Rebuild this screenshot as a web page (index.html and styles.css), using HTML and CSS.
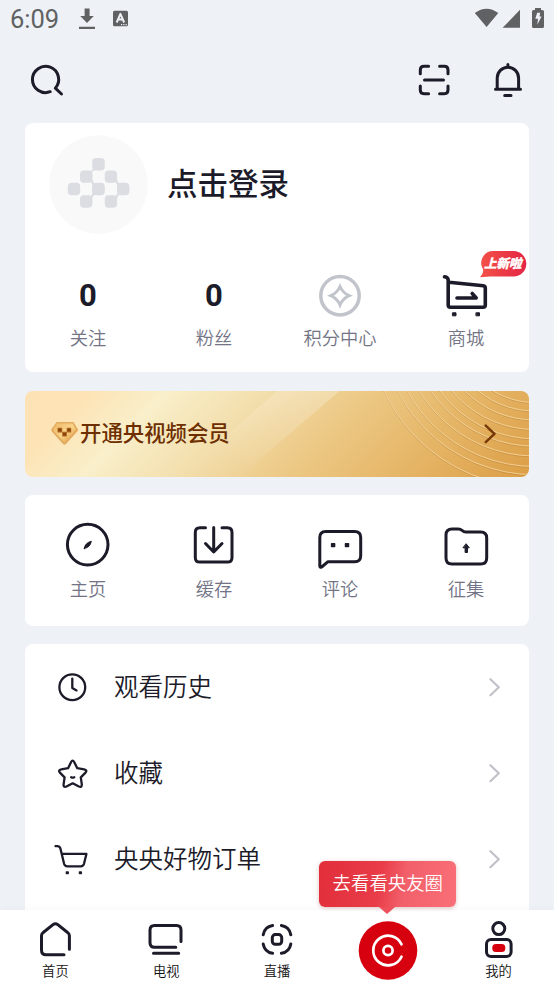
FILE: index.html
```html
<!DOCTYPE html>
<html lang="zh-CN">
<head>
<meta charset="utf-8">
<title>我的</title>
<link rel="stylesheet" href="styles.css">
</head>
<body>
<div class="screen">
  <div class="status">
    <span class="clock">6:09</span>
    <svg class="status-left" viewBox="76 0 56 38"><path d="M84.600 8.500h5v7.500h4.200L87 23l-6.800-7h4.400zM79 26.800h16v2.200H79z"/><rect x="113" y="10.800" width="15" height="15.400" rx="1.500"/><path class="cut" d="M116.700 22.500l3.700-8.700 3.700 8.700M118 19.600h4.800"/><path class="dots" d="M121 24.600h1.200M123.300 24.600h1.200M125.600 24.600h1.200"/></svg>
    <svg class="status-right" viewBox="472 0 82 38"><path d="M474.800 13Q486.500 4.500 498.300 13L486.600 27zM502.600 27.800L520 9.800V27.800zM535 8h6v2h1.500q1.500 0 1.500 1.500v15q0 1.500-1.500 1.500h-9q-1.500 0-1.500-1.500v-15q0-1.500 1.500-1.500H535z"/><path class="bolt" d="M537.200 12.800h3l-.7 3.800h2l-4.200 8.200.7-6h-2.700z"/></svg>
  </div>
  <header class="header">
    <svg class="ic" viewBox="25 60 42 40"><path d="M49.200 91.700A13.100 13.100 0 1 1 54.300 88.200L60.500 94"/></svg>
    <svg class="ic push" viewBox="413 60 42 40"><path d="M420.300 73.800V70q0-3.700 3.700-3.700h4.600M439.600 66.300h4.700q3.700 0 3.700 3.700v3.800M448 86v4q0 3.700-3.700 3.700h-4.700M428.600 93.700H424q-3.700 0-3.700-3.700v-4M424.500 80h19"/></svg>
    <svg class="ic" viewBox="487 60 42 40"><path d="M495.500 89.300h25M497.200 89V78a10.700 10.700 0 0 1 21.400 0v11M507.900 64.500v2.500M504.700 95.500h6.300"/></svg>
  </header>

  <main class="main">
    <section class="card profile">
      <div class="user">
        <svg class="avatar" viewBox="49 135 99 99"><circle cx="98.500" cy="184.500" r="49.300"/><g><rect x="92.200" y="158" width="12.600" height="12.600" rx="4"/><rect x="80" y="170.400" width="12.400" height="12.400" rx="4"/><rect x="104.700" y="170.400" width="12.400" height="12.400" rx="4"/><rect x="67.800" y="182.800" width="12.400" height="12.400" rx="4"/><rect x="92.200" y="182.800" width="12.600" height="12.400" rx="4"/><rect x="117" y="182.800" width="12.400" height="12.400" rx="4"/><rect x="80" y="195.200" width="12.400" height="12.600" rx="4"/><rect x="104.700" y="195.200" width="12.400" height="12.600" rx="4"/><path d="M90.500 171.500l3-3 1 1-3 3.500zM90.500 181l2-1 2 4-2 1zM90.500 197l2-4 2 1.500-2 3zM115 180.500l2-1 2 4.500-2 1zM115 197.500l2-4 2 1-2 4zM92.200 186v6h4v-6zM117 186v6h4v-6z"/></g></svg>
        <span class="login">点击登录</span>
      </div>
      <div class="grid">
        <div class="cell"><b class="count">0</b><span class="label">关注</span></div>
        <div class="cell"><b class="count">0</b><span class="label">粉丝</span></div>
        <div class="cell"><svg class="big" viewBox="314 270 52 52"><g class="gray"><circle cx="340" cy="295.700" r="19.200"/><path d="M340 286.500Q342.800 292.900 349.200 295.700Q342.800 298.500 340 304.900Q337.200 298.500 330.800 295.700Q337.200 292.900 340 286.500z"/></g></svg><span class="label">积分中心</span></div>
        <div class="cell"><svg class="big" viewBox="440 270 52 52"><g class="bold"><path d="M444.500 276.700q3.700 .5 3.700 3.300v25q0 2.300 2.300 2.300h32.500q2.300 0 2.300-2.300v-17q0-2-2-2.200L449 282.300M457 298h19.200l-4-4.500"/><path class="solid" d="M452.800 312.800h3.200v3h-3.200zM476.300 312.800h3.200v3h-3.200z"/></g></svg><span class="label">商城</span>
          <span class="badge"><svg viewBox="480 250 47 28"><defs><linearGradient id="bg"><stop offset="0" stop-color="#f35248"/><stop offset="1" stop-color="#e42445"/></linearGradient></defs><path fill="url(#bg)" d="M493 251h20.500a12.800 12.800 0 0 1 0 25.600H490l-10 .7q4-4.500 3-8a12 12 0 0 1 10-18.300z"/></svg><em>上新啦</em></span>
        </div>
      </div>
    </section>

    <section class="vip">
      <svg class="vip-bg" viewBox="25 390.500 504 86"><defs><linearGradient id="sh" x1="1" y1="0" x2="0" y2="1"><stop offset="0" stop-color="#fff" stop-opacity=".26"/><stop offset=".75" stop-color="#fff" stop-opacity=".02"/><stop offset="1" stop-color="#fff" stop-opacity="0"/></linearGradient></defs><path fill="url(#sh)" d="M278 390h62l-101 87h-62z"/><g class="rings"><circle cx="535" cy="320" r="166.600"/><circle cx="535" cy="320" r="154.200"/><circle cx="535" cy="320" r="146"/><circle cx="535" cy="320" r="135.500"/><circle cx="535" cy="320" r="125.700"/><circle cx="535" cy="320" r="118.300"/><circle cx="535" cy="320" r="109"/><circle cx="535" cy="320" r="99.500"/><circle cx="535" cy="320" r="90.500"/><circle cx="535" cy="320" r="82"/></g></svg>
      <svg class="gem" viewBox="51 422 28 25"><defs><linearGradient id="gm" x1="0" y1="0" x2="1" y2="1"><stop offset="0" stop-color="#edb766"/><stop offset=".5" stop-color="#f9d58b"/><stop offset="1" stop-color="#dc9038"/></linearGradient></defs><path fill="#e3ab5d" d="M56.500 423h17l4.500 7.500q0 1-.8 2L66 445q-1.500 1.500-3 0L51.800 432.500q-.8-1-.5-2z"/><path fill="url(#gm)" d="M57 424.500h15.500l3.500 6L64.500 443.500 53 431z"/><path fill="#b0651f" d="M57.500 428.700h4.700v4h4.500v-4h4.500v4.700h-4.300v4h-4.700v-4h-4.700z"/><path fill="#85450f" d="M58.300 429.700h3v2.500h-3zM67.500 429.700h3v2.500h-3zM63 434h3v2.500h-3z"/></svg>
      <span class="vip-text">开通央视频会员</span>
      <svg class="vip-arrow" viewBox="480 422 20 24"><path d="M485.700 425.700l8.800 8.200-8.800 8.200"/></svg>
    </section>

    <section class="card tools">
      <div class="cell"><svg class="big" viewBox="62 519 52 52"><circle cx="87.700" cy="544.600" r="20.300"/><path class="solid leaf" d="M84.300 548.500q.5-5.500 7-7.200-1 6-7 7.200z"/></svg><span class="label">主页</span></div>
      <div class="cell"><svg class="big" viewBox="188 519 52 52"><path d="M205.500 527.700H200q-4.700 0-4.700 4.700v25q0 4.700 4.700 4.700h27.300q4.700 0 4.700-4.700v-25q0-4.700-4.700-4.700H222M213.700 527.500v24.300M205.500 543.500l8.200 8.500 8.300-8.500"/></svg><span class="label">缓存</span></div>
      <div class="cell"><svg class="big" viewBox="314 519 52 52"><path d="M325.700 531.500h29q6 0 6 6v18.200q0 6-6 6H328l-6.300 5.300q-1.900 1-1.900-1V537.500q0-6 5.900-6z"/><path class="solid" d="M331.600 543.700h3v2.800h-3zM345.500 543.700h3v2.800h-3z"/></svg><span class="label">评论</span></div>
      <div class="cell"><svg class="big" viewBox="440 519 52 52"><path d="M452 529h6.300c4 0 4 3 7.200 3h15.200q6 0 6 6v20q0 6-6 6H452q-6 0-6-6v-23q0-6 6-6z"/><path class="solid arrow" d="M466.300 544l3 3.800h-1.800v4.700h-2.400v-4.700h-1.800z"/></svg><span class="label">征集</span></div>
    </section>

    <section class="card list">
      <div class="row"><svg class="li" viewBox="53 668 38 38"><circle cx="72.300" cy="687.200" r="12.900"/><path d="M72.300 678.700v9.300l4.200 2.400"/></svg><span>观看历史</span><svg class="chev" viewBox="484 675 20 24"><path d="M490.400 679.200l8.400 8-8.400 8"/></svg></div>
      <div class="row"><svg class="li" viewBox="53 754 38 38"><path d="M71 762.200q1.600-3 3.300 0l3 6 6.800 1.100q3.500.8 1.400 3.300l-4.700 4.800 1 6.900q.3 3.300-2.900 2.200l-6.200-3.200-6.200 3.200q-3.300 1.200-2.900-2.200l1-6.900-4.700-4.800q-2-2.600 1.400-3.300l6.800-1.100zM71.200 777.300q1.500 .8 3 0"/></svg><span>收藏</span><svg class="chev" viewBox="484 675 20 24"><path d="M490.400 679.200l8.400 8-8.400 8"/></svg></div>
      <div class="row"><svg class="li" viewBox="53 840 38 38"><path d="M55.500 846.200h2.200q2 .1 2.700 2.200l3.700 15.400q.7 2.600 3.300 2.600h13.300q2.600 0 3.300-2.600l2.400-9.900H62.300"/><path class="solid" d="M66.400 872h1.800v1.500h-1.800zM79.500 872h1.800v1.500h-1.800z"/></svg><span>央央好物订单</span><svg class="chev" viewBox="484 675 20 24"><path d="M490.400 679.200l8.400 8-8.400 8"/></svg></div>
    </section>
  </main>

  <nav class="nav">
    <div class="tab"><svg viewBox="33 918 44 43"><path d="M64 954.700H46q-4.500 0-4.500-4.500v-14.500q0-2 1.700-3.200l9.800-7.900q2.400-1.800 4.800 0l9.800 7.900q1.800 1.200 1.800 3.200v13.500"/></svg><span>首页</span></div>
    <div class="tab"><svg viewBox="144.300 918 44 43"><path d="M181.300 941.500V930q0-4.500-4.500-4.500h-22q-4.500 0-4.500 4.500v12.800q0 4.500 4.500 4.500h21.300M153.800 953.300h25.200"/></svg><span>电视</span></div>
    <div class="tab"><svg viewBox="255 918 44 43"><path d="M272.600 925.500q-8 1.200-9.400 9.300M281.400 925.500q8 1.200 9.400 9.300M290.800 944q-1.400 8-9.400 9.300M272.600 953.300q-8-1.200-9.400-9.300"/><rect x="272.300" y="934.600" width="9.400" height="9.600" rx="3"/></svg><span>直播</span></div>
    <div class="tab center"><svg class="disc" viewBox="358 921 60 60"><circle class="red" cx="388" cy="950.500" r="29.300"/><path class="white" d="M401.500 944.300a14.800 14.800 0 1 0 0 12.400"/><circle class="white" cx="388" cy="950.500" r="4.600"/></svg>
      <div class="tip">去看看央友圈</div></div>
    <div class="tab"><svg viewBox="476.900 918 44 43"><circle cx="498.700" cy="928.600" r="6"/><rect x="486.400" y="939.600" width="24.600" height="16.800" rx="4.500"/><rect class="red" x="492.200" y="944" width="13" height="8" rx="3.500"/></svg><span>我的</span></div>
  </nav>
</div>
</body>
</html>
```
FILE: styles.css
```css
* { box-sizing: border-box; }
body {
  margin: 0;
  font-family: "Noto Sans CJK SC", sans-serif;
  font-weight: 350;
  color: #1c1b29;
}
svg {
  display: block;
  fill: none;
  stroke: #1c1b29;
  stroke-width: 3;
  stroke-linecap: round;
  stroke-linejoin: round;
  flex: none;
}
.solid { fill: #1c1b29; stroke-width: 1.500; }
.leaf, .arrow { stroke-width: 1; }
.screen {
  width: 554px;
  height: 984px;
  overflow: hidden;
  background: #eef1f6;
  display: flex;
  flex-direction: column;
}
.status {
  height: 38px;
  flex: none;
  display: flex;
  align-items: center;
  padding-left: 10px;
}
.clock { width: 66px; font: 400 25.500px/38px Roboto, sans-serif; color: #5f6163; }
.status svg { height: 38px; fill: #5f6163; stroke: none; }
.status-left { width: 56px; }
.status-right { width: 82px; margin-left: auto; }
.status .cut { fill: none; stroke: #eef1f7; stroke-width: 2; stroke-linecap: butt; }
.status .dots { stroke: #eef1f7; stroke-width: 1.200; stroke-linecap: butt; }
.status .bolt { fill: #eef1f7; }
.header {
  height: 85px;
  flex: none;
  display: flex;
  align-items: center;
  gap: 32px;
  padding: 0 25px 1px;
}
.ic { width: 42px; height: 40px; }
.ic:first-child { margin-left: 1px; }
.push { margin-left: auto; }
.main {
  flex: 1;
  min-height: 0;
  overflow: hidden;
  padding: 0 25px;
  display: flex;
  flex-direction: column;
}
.card { background: #fff; border-radius: 8px; flex: none; }
.profile { height: 249px; padding-top: 12px; }
.user { display: flex; align-items: center; gap: 19px; padding-left: 24px; height: 99px; }
.avatar { width: 99px; height: 99px; stroke: none; }
.avatar circle { fill: #f9f9f9; }
.avatar g { fill: #dcdde2; }
.login { font-size: 30.500px; font-weight: 500; line-height: 44px; padding-bottom: 6px; }
.grid, .tools { display: grid; grid-template-columns: repeat(4, 126px); }
.grid { margin-top: 36px; }
.cell { display: flex; flex-direction: column; align-items: center; position: relative; }
.big { width: 52px; height: 52px; }
.count { height: 52px; font: 700 31px/51px Roboto, sans-serif; }
.label { font-size: 18.300px; line-height: 28px; margin-top: 1px; color: #727485; }
.gray { stroke: #c1c4cb; stroke-width: 3.500; }
.gray path { stroke-linejoin: miter; stroke-width: 3; }
.bold { stroke-width: 3.600; }
.bold .solid { stroke-width: 1; }
.badge { position: absolute; left: 77px; top: -20px; width: 47px; height: 28px; }
.badge svg { width: 47px; height: 28px; stroke: none; }
.badge em {
  position: absolute;
  left: 4px;
  top: 4px;
  width: 38px;
  font-size: 12.500px;
  line-height: 18px;
  font-weight: 900;
  color: #fff;
  -webkit-text-stroke: .3px #fff;
  white-space: nowrap;
}
.vip {
  position: relative;
  flex: none;
  height: 86px;
  margin: 18.500px 0;
  border-radius: 8px;
  overflow: hidden;
  display: flex;
  align-items: center;
  padding: 0 29px 0 26px;
  background: linear-gradient(135deg, #fde2b5 0%, #fde4b7 12%, #f9efca 24%, #f3dfae 40%, #edcb89 56%, #e6b769 76%, #dc9e46 100%);
}
.vip-bg { position: absolute; left: 0; top: 0; width: 504px; height: 86px; stroke: none; }
.rings { stroke: #f3d29a; stroke-width: .9; filter: drop-shadow(0 1px 0 rgba(145, 95, 30, .25)); }
.gem { width: 28px; height: 25px; stroke: none; position: relative; }
.vip-text { position: relative; font-size: 21.400px; font-weight: 500; line-height: 32px; color: #6d2e00; margin-left: 1px; padding-bottom: 3px; }
.vip-arrow { position: relative; width: 20px; height: 24px; margin-left: auto; stroke: #773907; stroke-width: 2.500; }
.tools { height: 131px; padding-top: 24px; align-content: start; }
.tools .label { margin-top: 3px; }
.list { height: 300px; margin-top: 18px; }
.row { height: 86px; display: flex; align-items: center; padding: 0 25px 0 28px; font-size: 24.500px; line-height: 36px; }
.row span { margin-left: 23px; padding-bottom: 2px; }
.li { width: 38px; height: 38px; stroke-width: 2.300; }
.chev { width: 20px; height: 24px; margin-left: auto; stroke: #c1c2c9; stroke-width: 2.200; }
.nav {
  position: relative;
  height: 74px;
  flex: none;
  display: grid;
  grid-template-columns: repeat(5, 1fr);
  background: #fff;
  box-shadow: 0 -1px 8px rgba(0, 0, 0, .03);
}
.tab { display: flex; flex-direction: column; align-items: center; padding-top: 8px; position: relative; }
.tab svg { width: 44px; height: 43px; }
.tab span { font-size: 13.300px; line-height: 20px; font-weight: 350; color: #111; }
.tab.center { padding-top: 11px; }
.tab .disc { width: 60px; height: 60px; }
.red { fill: #d7000f; stroke: none; }
.white { stroke: #fff; stroke-width: 2.700; }
.tip {
  position: absolute;
  top: -49px;
  left: 50%;
  width: 137px;
  height: 46px;
  margin-left: -68.500px;
  border-radius: 6px;
  background: linear-gradient(100deg, #e22e3b 0%, #e83c48 44%, #f2606a 62%, #f96f78 100%);
  box-shadow: 0 1px 4px rgba(120, 0, 0, .25);
  color: #fff;
  font-size: 18.400px;
  line-height: 42px;
  text-align: center;
}
.tip::after {
  content: "";
  position: absolute;
  left: 60px;
  top: 46px;
  border: 8px solid transparent;
  border-top: 7px solid #ed505b;
  border-bottom: 0;
}
```
